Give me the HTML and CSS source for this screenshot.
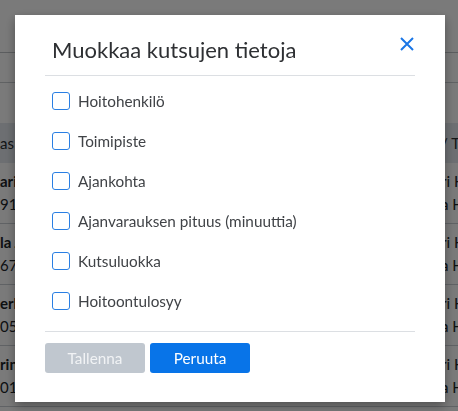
FILE: index.html
```html
<!DOCTYPE html>
<html lang="fi">
<head>
    <meta charset="UTF-8">
    <meta name="viewport" content="width=device-width, initial-scale=1.0">
    <title>Kutsut</title>
    <link rel="stylesheet" href="styles.css">
</head>
<body>
    <div class="page">
        <div class="topbar"></div>
        <div class="toolbar"></div>
        <table class="calls">
            <tr class="head">
                <th class="c-name">as</th>
                <th class="c-mid"></th>
                <th class="c-nurse">/ T</th>
            </tr>
            <tr>
                <td class="c-name"><b>ari</b><br>91-</td>
                <td class="c-mid"></td>
                <td class="c-nurse">ri H<br>a H</td>
            </tr>
            <tr>
                <td class="c-name"><b>la J</b><br>67-</td>
                <td class="c-mid"></td>
                <td class="c-nurse">ri H<br>a H</td>
            </tr>
            <tr>
                <td class="c-name"><b>erk</b><br>05.</td>
                <td class="c-mid"></td>
                <td class="c-nurse">ri H<br>a H</td>
            </tr>
            <tr>
                <td class="c-name"><b>rin</b><br>01.</td>
                <td class="c-mid"></td>
                <td class="c-nurse">ri H<br>a H</td>
            </tr>
        </table>
    </div>

    <div class="overlay">
        <div class="modal">
            <div class="modal-header">
                <h2>Muokkaa kutsujen tietoja</h2>
                <button class="close" aria-label="Sulje">
                    <svg width="14" height="14" viewBox="0 0 14 14"><path d="M1 1L13 13M13 1L1 13" stroke="#1a76e6" stroke-width="2" fill="none"/></svg>
                </button>
            </div>
            <div class="modal-body">
                <label class="check"><input type="checkbox"> Hoitohenkilö</label>
                <label class="check"><input type="checkbox"> Toimipiste</label>
                <label class="check"><input type="checkbox"> Ajankohta</label>
                <label class="check"><input type="checkbox"> Ajanvarauksen pituus (minuuttia)</label>
                <label class="check"><input type="checkbox"> Kutsuluokka</label>
                <label class="check"><input type="checkbox"> Hoitoontulosyy</label>
            </div>
            <div class="modal-footer">
                <button class="btn btn-disabled" disabled>Tallenna</button>
                <button class="btn btn-primary">Peruuta</button>
            </div>
        </div>
    </div>
</body>
</html>
```

FILE: styles.css
```css
body {
    margin: 0;
    font-family: "Lato", "Open Sans", sans-serif;
    color: #212529;
    background-color: #fff;
    font-size: 15.3px;
    overflow: hidden;
}
.page {
    overflow: hidden;
}
.topbar {
    height: 52px;
    border-bottom: 1px solid #bfc3c7;
}
.toolbar {
    height: 29px;
    border-bottom: 1px solid #c8ccd0;
    margin-bottom: 40px;
}
.calls {
    width: 100%;
    border-collapse: collapse;
    table-layout: fixed;
    font-size: 15px;
}
.calls th, .calls td {
    text-align: left;
    white-space: nowrap;
    overflow: hidden;
    padding: 0;
}
.calls .head {
    height: 40px;
    background-color: #e3e8ee;
}
.calls th {
    font-weight: normal;
    color: #2b2f33;
}
.calls td {
    height: 60px;
    line-height: 23px;
    border-bottom: 1px solid #c9ced3;
}
.c-name { width: 60px; }
.c-nurse { width: 17px; }

.overlay {
    position: fixed;
    inset: 0;
    background-color: rgba(0, 0, 0, 0.52);
    display: flex;
    justify-content: center;
    align-items: flex-start;
    padding: 15px 0 0 2px;
}
.modal {
    width: 370px;
    height: 357px;
    background-color: #fff;
    padding: 0 30px 30px;
    box-shadow: 0 4px 10px rgba(0, 0, 0, 0.35);
    display: flex;
    flex-direction: column;
}
.modal-header {
    display: flex;
    justify-content: space-between;
    align-items: flex-start;
    padding: 20px 0 10px 7px;
    border-bottom: 1px solid #dcdfe3;
}
.modal-header h2 {
    margin: 0;
    font-size: 22px;
    line-height: 30px;
    font-weight: normal;
    color: #2e3033;
}
.close {
    border: none;
    background: none;
    padding: 0;
    margin: 2px 1px 0 0;
    width: 14px;
    height: 14px;
    cursor: pointer;
}
.close svg { display: block; }
.modal-body {
    padding: 5px 0 10px 7px;
    border-bottom: 1px solid #dcdfe3;
}
.check {
    display: flex;
    align-items: center;
    height: 40px;
    gap: 8px;
    color: #404347;
}
.check input {
    appearance: none;
    margin: 0;
    width: 18px;
    height: 18px;
    border: 1.5px solid #2a7fe3;
    border-radius: 3px;
    background: #fff;
}
.modal-footer {
    display: flex;
    gap: 5px;
    padding-top: 11px;
}
.btn {
    width: 100px;
    height: 30px;
    border: none;
    border-radius: 3px;
    font-family: inherit;
    font-size: 15.3px;
    color: #fff;
}
.btn-disabled {
    background-color: #c0c7cf;
    color: #f1f3f5;
}
.btn-primary {
    background-color: #0874e8;
}
```
